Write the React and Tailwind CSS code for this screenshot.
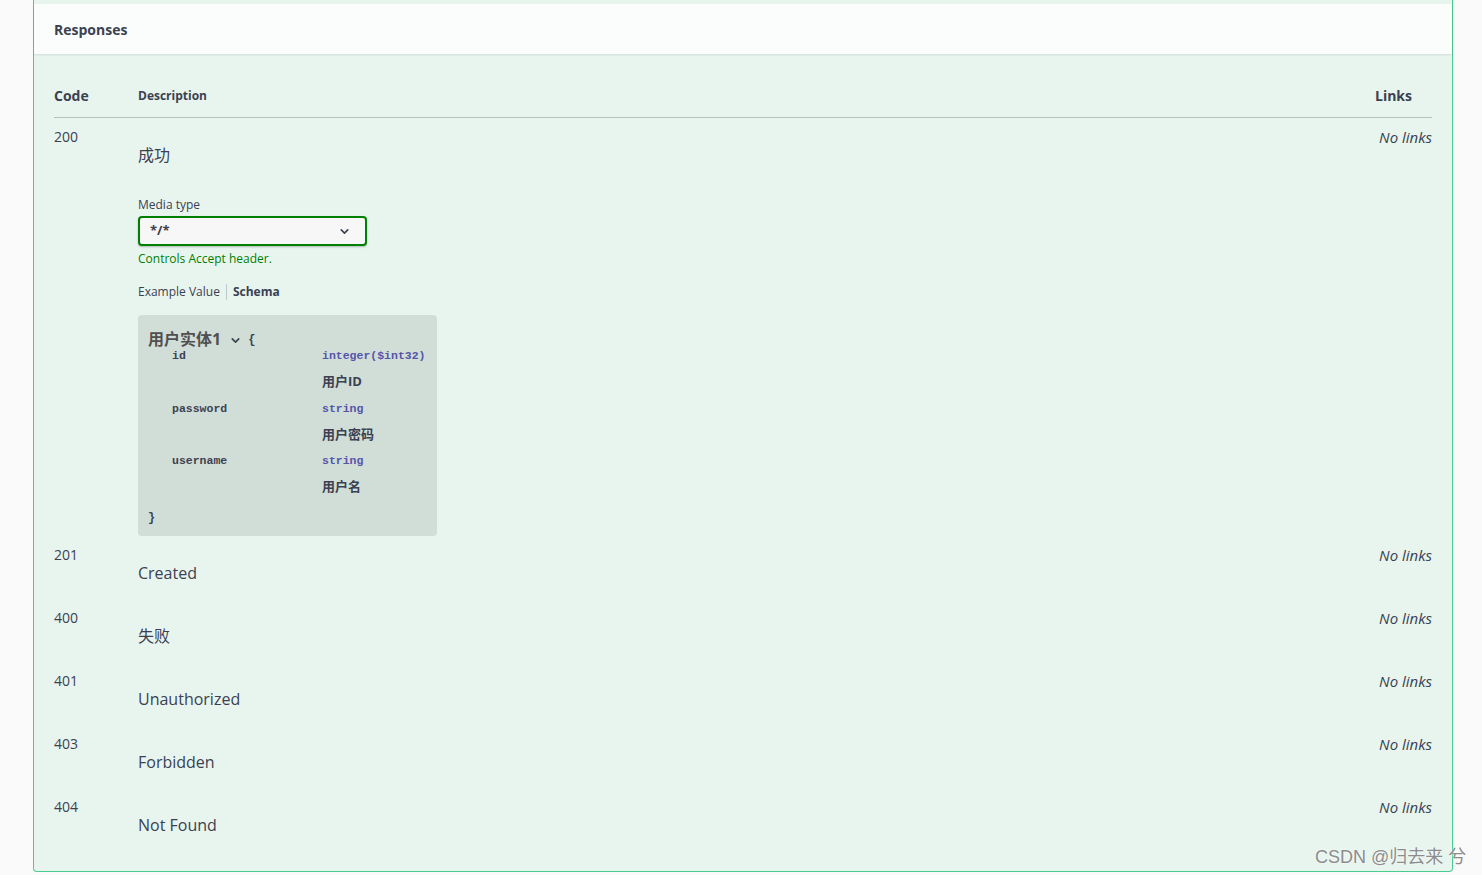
import { ChevronDown } from 'lucide-react';

const SANS = 'font-["Open_Sans","Noto_Sans_CJK_SC",sans-serif]';
const MONO = 'font-["Liberation_Mono","Noto_Sans_CJK_SC",monospace]';

const PROPS = [
  { name: 'id', type: 'integer($int32)', desc: '用户ID' },
  { name: 'password', type: 'string', desc: '用户密码' },
  { name: 'username', type: 'string', desc: '用户名' },
];

const OTHER_ROWS = [
  { code: '201', desc: 'Created' },
  { code: '400', desc: '失败' },
  { code: '401', desc: 'Unauthorized' },
  { code: '403', desc: 'Forbidden' },
  { code: '404', desc: 'Not Found' },
];

function NoLinks() {
  return <div className="pt-[9px] text-[15px] leading-5 italic text-[#3b4151]">No links</div>;
}

function SchemaBox() {
  return (
    <div className="w-[299px] rounded bg-[#d1ddd7] pl-[10px] pt-[14px] pb-[10px]">
      {/* model title */}
      <div className="flex items-center h-[20px]">
        <span className={`${SANS} text-[16px] font-bold text-[#505050]`}>用户实体1</span>
        <ChevronDown className="w-[13px] h-[13px] ml-[8px] mt-[3px] text-[#3b4151]" strokeWidth={3} />
        <span className={`${MONO} text-[12px] font-bold text-[#3b4151] ml-[6px] mt-[2px]`}>{'{'}</span>
      </div>
      {/* properties */}
      <div className="-mt-[3px]">
        {PROPS.map((p, i) => (
          <div key={p.name} className={`flex ${i > 0 ? 'mt-[7.5px]' : ''}`}>
            <div className={`${MONO} w-[174px] pl-[24px] text-[11.5px] font-bold leading-5 text-[#3b4151]`}>{p.name}</div>
            <div>
              <div className={`${MONO} text-[11.5px] font-bold leading-5 text-[#5555aa]`}>{p.type}</div>
              <div className={`${SANS} mt-[5px] text-[13px] font-bold leading-5 text-[#3b4151]`}>{p.desc}</div>
            </div>
          </div>
        ))}
      </div>
      <div className={`${MONO} mt-[14px] text-[12px] font-bold leading-4 text-[#3b4151]`}>{'}'}</div>
    </div>
  );
}

export default function App() {
  return (
    <div className={`${SANS} relative w-[1482px] h-[875px] bg-[#fafafa] overflow-hidden text-[#3b4151]`}>
      <div className="ml-[33px] w-[1420px] h-[872px] bg-[#e8f5ef] border-x border-b border-[#49cc90] rounded-b pt-[4px]">
        {/* Section header */}
        <div className="h-[50px] flex items-center px-[20px] bg-[#fafdfc] shadow-[0_1px_2px_rgba(0,0,0,0.1)]">
          <h4 className="text-[14px] font-bold">Responses</h4>
        </div>

        <div className="px-[20px]">
          {/* table head */}
          <div className="flex items-center pt-[32px] pb-[11px] border-b border-[#3b4151]/30">
            <div className="w-[84px] text-[14px] font-bold leading-5">Code</div>
            <div className="flex-1 text-[12px] font-bold leading-5">Description</div>
            <div className="pr-[20px] text-[14px] font-bold leading-5">Links</div>
          </div>

          {/* 200 */}
          <div className="flex">
            <div className="w-[84px] pt-[9px] text-[14px] leading-5">200</div>
            <div className="flex-1 pt-[25px]">
              <p className="text-[16px] leading-6">成功</p>
              <div className="mt-[30px] text-[12px] leading-4">Media type</div>
              <div className="mt-[3px] w-[229px] h-[30px] rounded border-2 border-[#008000] bg-[#f7f7f7] shadow-[0_1px_2px_rgba(0,0,0,0.25)] flex items-center justify-between pl-[10px] pr-[14px]">
                <span className="text-[13px] font-bold text-[#3b4151]">*/*</span>
                <ChevronDown className="w-[13px] h-[13px] text-[#3b4151]" strokeWidth={3} />
              </div>
              <div className="mt-[5px] text-[12px] leading-4 text-[#008000]">Controls Accept header.</div>
              <div className="mt-[17px] flex items-center text-[12px] leading-4">
                <span>Example Value</span>
                <span className="mx-[6px] h-[16px] w-px bg-[#3b4151]/25" />
                <span className="font-bold">Schema</span>
              </div>
              <div className="mt-[15px]">
                <SchemaBox />
              </div>
            </div>
            <NoLinks />
          </div>

          {OTHER_ROWS.map((r) => (
            <div key={r.code} className="flex h-[63px]">
              <div className="w-[84px] pt-[9px] text-[14px] leading-5">{r.code}</div>
              <div className="flex-1 pt-[25px]">
                <p className="text-[16px] leading-6">{r.desc}</p>
              </div>
              <NoLinks />
            </div>
          ))}
        </div>
      </div>

      {/* watermark */}
      <div className="absolute left-[1315px] top-[845px] text-[18px] leading-6 text-[#8c8c8c] font-['Liberation_Sans','Noto_Sans_CJK_SC',sans-serif] [text-shadow:0_0_2px_#fff]">
        CSDN @归去来 兮
      </div>
    </div>
  );
}
